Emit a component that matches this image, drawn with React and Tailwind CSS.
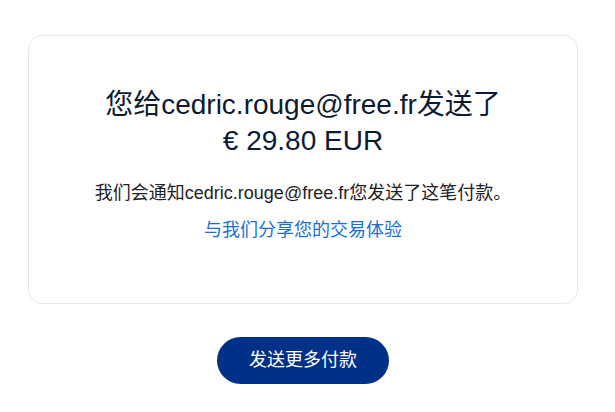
import React from "react";

const App = () => {
    return (
        <div
            className="min-h-[412px] w-full bg-white px-[28px] pt-[35px]"
            style={{ fontFamily: '"Liberation Sans", Arial, "Noto Sans CJK SC", sans-serif' }}
        >
            <div className="w-[550px]">
                {/* Confirmation card */}
                <div className="h-[269px] rounded-[14px] border border-[#e6e8ea] flex flex-col items-center pt-[51px]">
                    <h1 className="text-[28px] leading-[36px] text-[#0e1a33] text-center font-normal">
                        您给cedric.rouge@free.fr发送了
                        <br />
                        € 29.80 EUR
                    </h1>
                    <p className="mt-[21px] text-[18px] leading-[27px] text-[#1f2124]">
                        我们会通知cedric.rouge@free.fr您发送了这笔付款。
                    </p>
                    <a href="#" className="mt-[10px] text-[18px] leading-[27px] text-[#1a6fd6]">
                        与我们分享您的交易体验
                    </a>
                </div>

                {/* Action */}
                <div className="flex justify-center mt-[33px]">
                    <button className="w-[172px] h-[47px] rounded-full bg-[#003087] text-white text-[18px]">
                        发送更多付款
                    </button>
                </div>
            </div>
        </div>
    );
};

export default App;
